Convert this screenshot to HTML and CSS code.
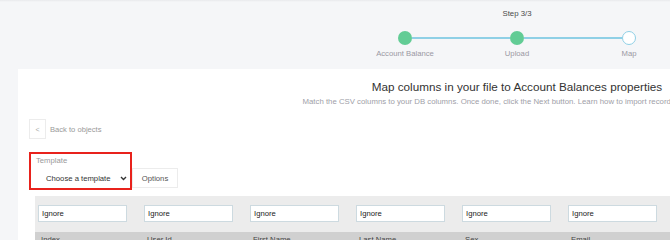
FILE: index.html
```html
<!DOCTYPE html>
<html>
<head>
<meta charset="utf-8">
<link rel="stylesheet" href="styles.css">
</head>
<body>
<div class="topline"></div>
<div class="stepper">
  <div class="step-count">Step 3/3</div>
  <div class="steps">
    <div class="step done"><span class="dot"></span><span class="label">Account Balance</span></div>
    <div class="step done"><span class="dot"></span><span class="label">Upload</span></div>
    <div class="step current"><span class="dot"></span><span class="label">Map</span></div>
  </div>
</div>
<div class="card">
  <h1 class="title">Map columns in your file to Account Balances properties</h1>
  <p class="subtitle">Match the CSV columns to your DB columns. Once done, click the Next button. Learn how to import records from a CSV file.</p>
  <div class="content">
    <div class="back"><span class="back-box">&lt;</span><span class="back-text">Back to objects</span></div>
    <div class="template-row">
      <div class="template-box">
        <div class="template-label">Template</div>
        <div class="select"><span>Choose a template</span>
          <svg class="chev" width="7" height="5" viewBox="0 0 7 5"><path d="M1 1 L3.5 3.5 L6 1" fill="none" stroke="#333" stroke-width="1.4"/></svg>
        </div>
      </div>
      <div class="options">Options</div>
    </div>
    <div class="mapping">
      <div class="inputs">
        <div class="inp">Ignore</div>
        <div class="inp">Ignore</div>
        <div class="inp">Ignore</div>
        <div class="inp">Ignore</div>
        <div class="inp">Ignore</div>
        <div class="inp">Ignore</div>
        <div class="inp">Ignore</div>
      </div>
      <div class="head">
        <div class="hcell">Index</div>
        <div class="hcell">User Id</div>
        <div class="hcell">First Name</div>
        <div class="hcell">Last Name</div>
        <div class="hcell">Sex</div>
        <div class="hcell">Email</div>
        <div class="hcell">Phone</div>
      </div>
    </div>
  </div>
</div>
</body>
</html>
```
FILE: styles.css
```css
html, body {
  margin: 0;
  padding: 0;
}
body {
  width: 670px;
  height: 240px;
  overflow: hidden;
  background: #f5f6f8;
  font-family: "Liberation Sans", Arial, sans-serif;
  color: #333;
}
.topline {
  height: 2px;
  background: linear-gradient(#e8e9ec, #f5f6f8);
}
.stepper {
  margin-left: 349px;
  width: 336px;
  padding-top: 7px;
}
.step-count {
  text-align: center;
  font-size: 7.8px;
  line-height: 10px;
  color: #4a4a4a;
}
.steps {
  display: flex;
  margin-top: 12px;
}
.step {
  position: relative;
  width: 112px;
  display: flex;
  flex-direction: column;
  align-items: center;
}
.step + .step::before {
  content: "";
  position: absolute;
  top: 6px;
  left: -49px;
  width: 98px;
  height: 1.5px;
  background: #8fd0e6;
}
.dot {
  width: 14px;
  height: 14px;
  border-radius: 50%;
  box-sizing: border-box;
}
.done .dot {
  background: #62cc95;
}
.current .dot {
  background: #fff;
  border: 1.5px solid #8fd0e6;
}
.label {
  margin-top: 4px;
  font-size: 7.7px;
  line-height: 10px;
  color: #9a98a3;
}
.card {
  margin-top: 10px;
  margin-left: 18px;
  width: 998px;
  height: 200px;
  background: #fff;
  padding-top: 11px;
}
.title {
  margin: 0;
  text-align: center;
  font-weight: normal;
  font-size: 11.7px;
  line-height: 14px;
  color: #333;
}
.subtitle {
  margin: 3px 0 0;
  text-align: center;
  font-size: 7.8px;
  line-height: 10px;
  color: #a0a0a8;
  white-space: nowrap;
}
.content {
  padding-left: 11px;
  margin-top: 12px;
}
.back {
  display: flex;
  align-items: center;
  height: 20px;
}
.back-box {
  width: 17px;
  height: 20px;
  box-sizing: border-box;
  border: 1px solid #ececec;
  display: flex;
  align-items: center;
  justify-content: center;
  font-size: 7px;
  color: #aaa;
}
.back-text {
  margin-left: 4px;
  font-size: 7.6px;
  color: #999;
}
.template-row {
  margin-top: 13px;
  display: flex;
  align-items: flex-end;
}
.template-box {
  border: 2px solid #e8221c;
  padding: 2px 0 0 4px;
}
.template-label {
  padding-left: 1px;
  font-size: 7.7px;
  line-height: 10px;
  color: #999;
}
.select {
  margin-top: 2px;
  width: 95px;
  height: 20px;
  box-sizing: border-box;
  display: flex;
  align-items: center;
  padding-left: 11px;
  font-size: 7.7px;
  color: #333;
  background: #fff;
}
.chev {
  margin-left: 9px;
}
.options {
  width: 46px;
  height: 20px;
  margin-bottom: 2px;
  box-sizing: border-box;
  border: 1px solid #ececec;
  display: flex;
  align-items: center;
  justify-content: center;
  font-size: 7.7px;
  color: #555;
}
.mapping {
  margin-top: 6px;
  margin-left: 6px;
  background: #ececec;
}
.inputs {
  display: flex;
  gap: 17px;
  padding: 9px 0 10px 3px;
}
.inp {
  flex: none;
  width: 89px;
  height: 17px;
  box-sizing: border-box;
  border: 1px solid #cddae0;
  background: #fff;
  font-size: 7.7px;
  line-height: 15px;
  padding-left: 3px;
  color: #222;
}
.head {
  display: flex;
  background: #d0d0d0;
  padding-left: 6px;
  height: 20px;
}
.hcell {
  flex: none;
  width: 106px;
  font-size: 7.7px;
  line-height: 14px;
  padding-top: 1px;
  color: #444;
}
```
